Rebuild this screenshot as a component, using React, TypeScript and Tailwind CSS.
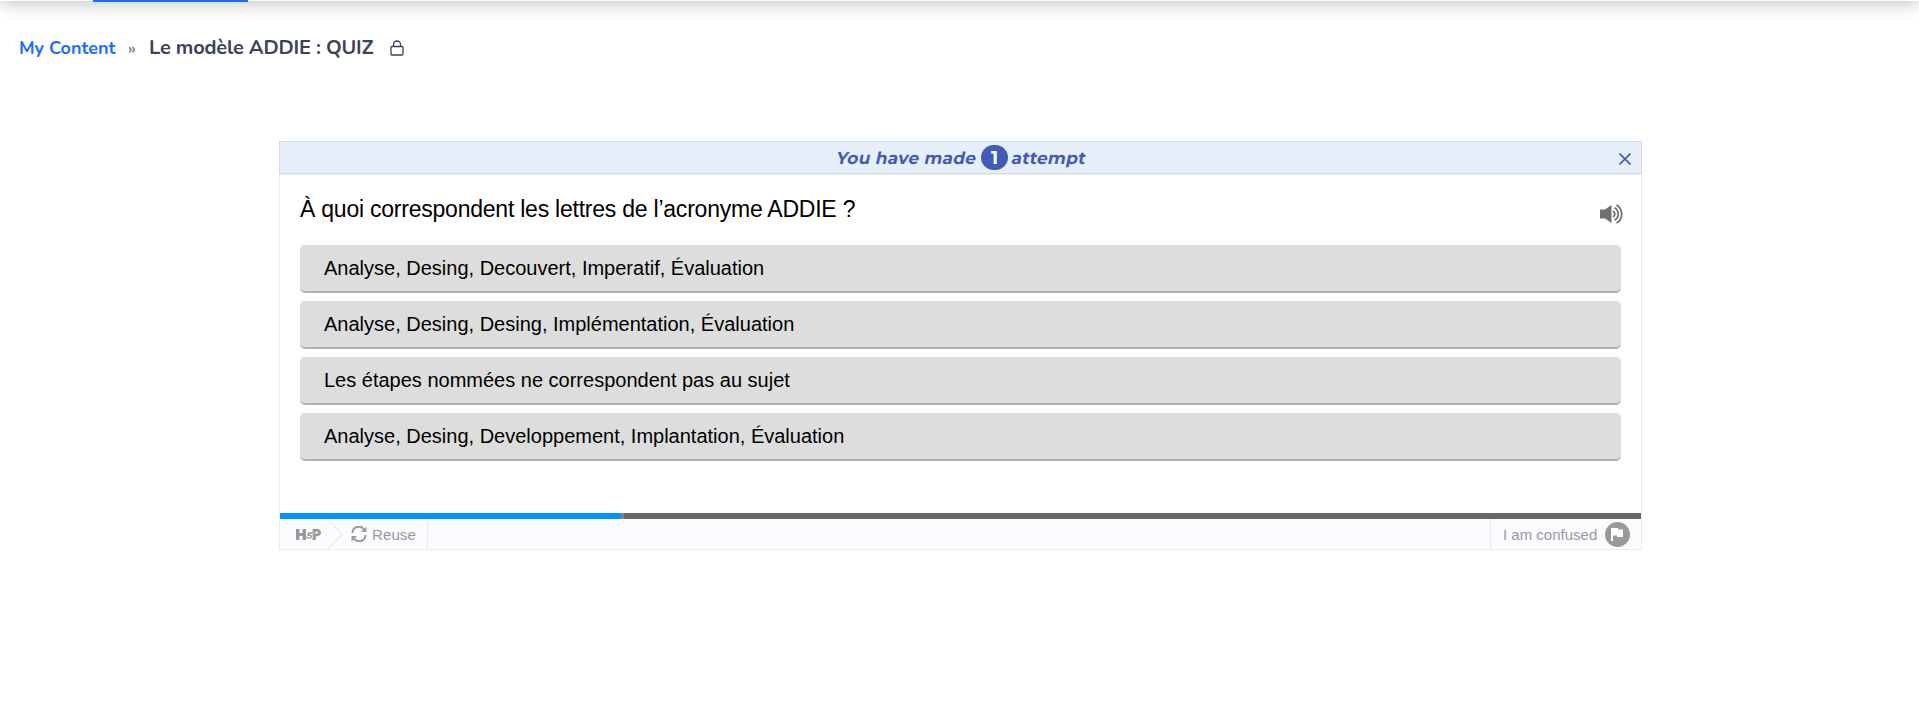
import React from 'react';

const answers = [
  'Analyse, Desing, Decouvert, Imperatif, Évaluation',
  'Analyse, Desing, Desing, Implémentation, Évaluation',
  'Les étapes nommées ne correspondent pas au sujet',
  'Analyse, Desing, Developpement, Implantation, Évaluation',
];

function TopEdge() {
  return (
    <div className="-mt-[59px] flex h-[60px] items-end bg-white pl-[93px] shadow-[0_3px_16px_rgba(0,0,0,0.23)]">
      <div className="-mb-px h-[2px] w-[155px] bg-[#1a6dff]" />
    </div>
  );
}

function Breadcrumb() {
  return (
    <div className="flex h-[93px] items-center pl-[19px] font-['Nunito','Lato',sans-serif] font-bold text-[#3b4358]">
      <a className="mt-px w-[98px] whitespace-nowrap text-[18px] text-[#1a6dff]">My Content</a>
      <span className="ml-[11px] mt-[2px] w-[21px] text-[16px] text-[#8a8a8a]">»</span>
      <h1 className="w-[241px] whitespace-nowrap text-[20px] tracking-[-0.2px]">Le modèle ADDIE : QUIZ</h1>
      <svg className="h-4 w-[14px]" viewBox="0 0 14 16" fill="none" stroke="currentColor" strokeWidth="1.3">
        <rect x="1" y="6.5" width="12" height="8.5" rx="1" />
        <path d="M3.5 6.5V4.5a3.5 3.5 0 0 1 7 0v2" />
      </svg>
    </div>
  );
}

function AttemptBanner() {
  return (
    <div className="-mx-px -mt-px flex h-[33px] items-center border border-[#cbdcf0] bg-[#e7effb] text-[#425bb8] shadow-[0_1px_0_#eeeeee]">
      <div className="flex flex-1 items-center pl-[557px] font-['Montserrat','Inter',sans-serif] text-[17px] font-bold">
        <span className="w-[140px] -skew-x-12 whitespace-nowrap pt-[3px] tracking-[0.25px]">You have made</span>
        <span className="mx-1 flex h-[25px] w-[27px] items-center justify-center rounded-full bg-[#425bb8] pt-px text-[18px] text-white">1</span>
        <span className="-skew-x-12 whitespace-nowrap pt-[3px] tracking-[0.25px]">attempt</span>
      </div>
      <svg className="mr-[10px] mt-[2px] h-3 w-3" viewBox="0 0 12 12" stroke="currentColor" strokeWidth="1.7">
        <path d="M0.5 0.5l11 11M11.5 0.5l-11 11" />
      </svg>
    </div>
  );
}

function Speaker() {
  return (
    <svg className="-mr-[3px] mt-2 h-5 w-6" viewBox="0 0 24 20" fill="none" stroke="#707070" strokeWidth="1.8">
      <path d="M0 5.500h5l6.500-4.500v18L5 14.500H0z" fill="#707070" stroke="none" />
      <path d="M13 7a3.400 3.400 0 0 1 0 6M14.500 3.700a7.200 7.200 0 0 1 0 12.600M16.500 .9a10.600 10.600 0 0 1 0 18.200" />
    </svg>
  );
}

function Footer() {
  return (
    <div className="flex h-[30px] items-center bg-[#fafcff] text-[15px] text-[#999]">
      <svg className="ml-4 h-[11px] w-[25px]" viewBox="0 0 25 11" fill="#999">
        <path d="M0 0h3.400v4h3.200V0H10v11H6.600V7H3.400v4H0z" />
        <path fillRule="evenodd" d="M16.500 0h4.700C23.600 0 25 1.400 25 3.600s-1.500 3.600-3.800 3.600h-1.400V11h-3.300zM19.800 2.500v2.200h1c1.700 0 1.700-2.200 0-2.200z" />
        <path d="M18.500 4h-6l-.5 2.400c2.200-.8 3.600.1 3.400 1.500-.3 1.600-3 1.800-5 .2" fill="none" stroke="#fafcff" strokeWidth="2.400" />
        <path d="M18.500 4h-6l-.5 2.400c2.200-.8 3.600.1 3.400 1.500-.3 1.600-3 1.800-5 .2" fill="none" stroke="#999" strokeWidth="1.300" />
      </svg>
      <svg className="ml-[6px] h-[30px] w-4" viewBox="0 0 16 30" fill="none" stroke="#ebebeb" strokeWidth="1.3">
        <path d="M1 0l14 15L1 30" />
      </svg>
      <svg className="ml-2 h-4 w-4" viewBox="0 0 16 16" fill="none" stroke="#999" strokeWidth="2">
        <path d="M1.500 7A6.300 6.300 0 0 1 13 3.500M14.500 9A6.300 6.300 0 0 1 3 12.500" />
        <path d="M15.500 .5v5.500h-5.500zM.5 15.500V10H6z" fill="#999" stroke="none" />
      </svg>
      <span className="ml-[5px] w-[55px] pt-[2px] text-[15.200px]">Reuse</span>
      <div className="h-full w-px bg-[#e6e8eb]" />
      <div className="flex-1" />
      <div className="h-full w-px bg-[#e6e8eb]" />
      <span className="ml-[12px] w-[102px] whitespace-nowrap pt-[2px]">I am confused</span>
      <svg className="mr-[11px] h-[25px] w-[25px]" viewBox="0 0 25 25">
        <circle cx="12.500" cy="12.500" r="12.500" fill="#999" />
        <path d="M6 6h7v1.500h5v7.500h-6v-1.500H8v5.500H6z" fill="#fff" />
      </svg>
    </div>
  );
}

export default function App() {
  return (
    <div className="flow-root h-[722px] overflow-hidden bg-white font-['Liberation_Sans',Arial,sans-serif]">
      <TopEdge />
      <Breadcrumb />
      <main className="ml-[279px] mt-[47px] h-[409px] w-[1363px] border border-[#ebebeb]">
        <AttemptBanner />
        <div className="h-[339px] px-5">
          <div className="flex h-[71px] items-center justify-between">
            <p className="text-[23px] tracking-[-0.230px] text-black">À quoi correspondent les lettres de l’acronyme ADDIE ?</p>
            <Speaker />
          </div>
          <div className="flex flex-col gap-2">
            {answers.map((a) => (
              <button key={a} className="flex h-12 items-center rounded-[5px] border-b-2 border-[#b0b0b0] bg-[#ddd] pl-6 text-left text-[20px] text-black">
                {a}
              </button>
            ))}
          </div>
        </div>
        <div className="flex h-[6px] bg-[#666]">
          <div className="w-[341px] bg-[#0094ff]" />
          <div className="w-[3px] bg-[#858585]" />
        </div>
        <Footer />
      </main>
    </div>
  );
}
